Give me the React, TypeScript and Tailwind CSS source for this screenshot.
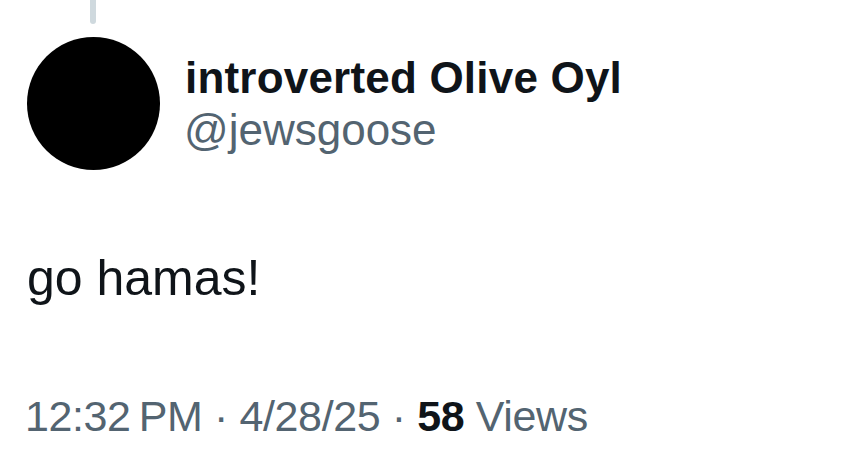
export default function App() {
  return (
    <div
      className="w-[857px] h-[460px] bg-white pl-[27px] overflow-hidden"
      style={{ fontFamily: '"Liberation Sans", Arial, sans-serif' }}
    >
      <div className="ml-[63px] w-[6px] h-[24px] bg-[#cfd9de] rounded-b-full" />
      <div className="mt-[13px] flex items-center gap-[25px]">
        <div className="w-[133px] h-[133px] rounded-full bg-black shrink-0" />
        <div className="flex flex-col">
          <div className="text-[44px] leading-[52px] font-bold text-[#0f1419] tracking-[0.2px]">introverted Olive Oyl</div>
          <div className="text-[44px] leading-[52px] text-[#536471] -ml-[1px]">@jewsgoose</div>
        </div>
      </div>
      <div className="mt-[78px] text-[50px] leading-[60px] text-[#0f1419]">go hamas!</div>
      <div className="mt-[82px] -ml-[2px] text-[43px] leading-[52px] text-[#536471] whitespace-nowrap tracking-[-0.4px]">
        12:32{"\u2009"}PM · 4/28/25 · <span className="font-bold text-[#0f1419]">58</span> Views
      </div>
    </div>
  );
}
